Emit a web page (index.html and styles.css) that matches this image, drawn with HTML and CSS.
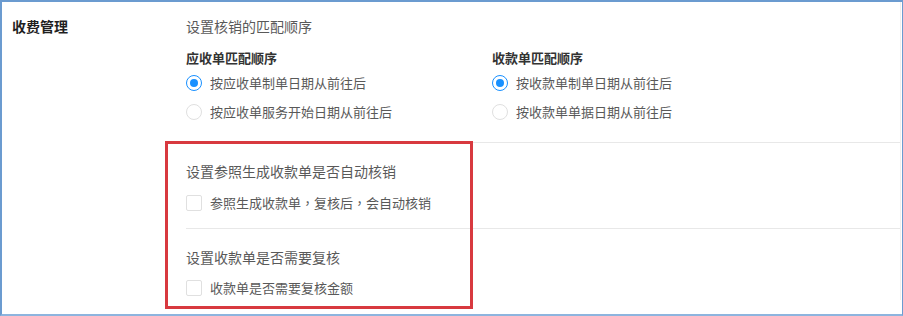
FILE: index.html
```html
<!DOCTYPE html>
<html lang="zh-CN">
<head>
<meta charset="utf-8">
<title>收费管理</title>
<link rel="stylesheet" href="styles.css">
</head>
<body>
<div class="frame">
  <div class="row">
    <div class="label">收费管理</div>
    <div class="content">
      <div class="section first">
        <div class="title">设置核销的匹配顺序</div>
        <div class="cols">
          <div class="col">
            <div class="subtitle">应收单匹配顺序</div>
            <div class="opt"><span class="radio checked"></span><span class="opt-text">按应收单制单日期从前往后</span></div>
            <div class="opt"><span class="radio"></span><span class="opt-text">按应收单服务开始日期从前往后</span></div>
          </div>
          <div class="col">
            <div class="subtitle">收款单匹配顺序</div>
            <div class="opt"><span class="radio checked"></span><span class="opt-text">按收款单制单日期从前往后</span></div>
            <div class="opt"><span class="radio"></span><span class="opt-text">按收款单单据日期从前往后</span></div>
          </div>
        </div>
      </div>
      <div class="section second">
        <div class="title">设置参照生成收款单是否自动核销</div>
        <div class="check"><span class="box"></span><span class="opt-text">参照生成收款单<span class="punct" lang="zh-Hant">，</span>复核后<span class="punct" lang="zh-Hant">，</span>会自动核销</span></div>
      </div>
      <div class="section third">
        <div class="title">设置收款单是否需要复核</div>
        <div class="check"><span class="box"></span><span class="opt-text">收款单是否需要复核金额</span></div>
      </div>
    </div>
  </div>
  <div class="highlight"></div>
</div>
</body>
</html>
```

FILE: styles.css
```css
html, body {
  margin: 0;
  padding: 0;
  background: #ffffff;
}
body {
  font-family: "Noto Sans CJK SC", "Noto Sans", "Liberation Sans", sans-serif;
  color: #595959;
}
.frame {
  position: relative;
  width: 903px;
  height: 316px;
  box-sizing: border-box;
  border-top: 2px solid #6b9bd0;
  border-left: 2px solid #6b9bd0;
  border-right: 1px solid #6b9bd0;
  border-bottom: 2px solid #8db4de;
  overflow: hidden;
  background: #fff;
}
.row {
  display: flex;
}
.label {
  width: 174px;
  padding-left: 10px;
  padding-top: 14px;
  font-size: 14px;
  line-height: 21px;
  font-weight: bold;
  color: #1f1f1f;
}
.content {
  width: 714px;
  border-right: 1px solid #f0f0f0;
}
.section {
  border-bottom: 1px solid #e8e8e8;
}
.section.first {
  padding-top: 14px;
  padding-bottom: 16px;
}
.section.second {
  padding-top: 18px;
  padding-bottom: 13px;
}
.section.third {
  padding-top: 18px;
  border-bottom: none;
}
.title {
  font-size: 14px;
  line-height: 21px;
  color: #595959;
}
.section.second .title,
.section.third .title {
  line-height: 20px;
}
.cols {
  display: flex;
  margin-top: 11px;
}
.col {
  width: 306px;
}
.subtitle {
  font-size: 13px;
  line-height: 20px;
  font-weight: bold;
  color: #333;
}
.opt {
  display: flex;
  align-items: center;
  height: 29px;
  font-size: 13px;
}
.opt-text {
  margin-left: 8px;
  line-height: 20px;
}
.punct {
  font-family: "Noto Sans CJK TC", "Noto Sans CJK SC", sans-serif;
}
.radio {
  width: 16px;
  height: 16px;
  box-sizing: border-box;
  border: 1px solid #e0e0e0;
  border-radius: 50%;
  position: relative;
  flex: none;
}
.radio.checked {
  border-color: #1890ff;
}
.radio.checked::after {
  content: "";
  position: absolute;
  left: 3px;
  top: 3px;
  width: 8px;
  height: 8px;
  border-radius: 50%;
  background: #1890ff;
}
.check {
  display: flex;
  align-items: center;
  height: 24px;
  margin-top: 10px;
  font-size: 13px;
}
.section.third .check {
  margin-top: 9px;
}
.box {
  width: 16px;
  height: 16px;
  box-sizing: border-box;
  border: 1px solid #e0e0e0;
  border-radius: 2px;
  flex: none;
}
.highlight {
  position: absolute;
  left: 163px;
  top: 139px;
  width: 308px;
  height: 168px;
  box-sizing: border-box;
  border: 3px solid #d8393f;
}
```
